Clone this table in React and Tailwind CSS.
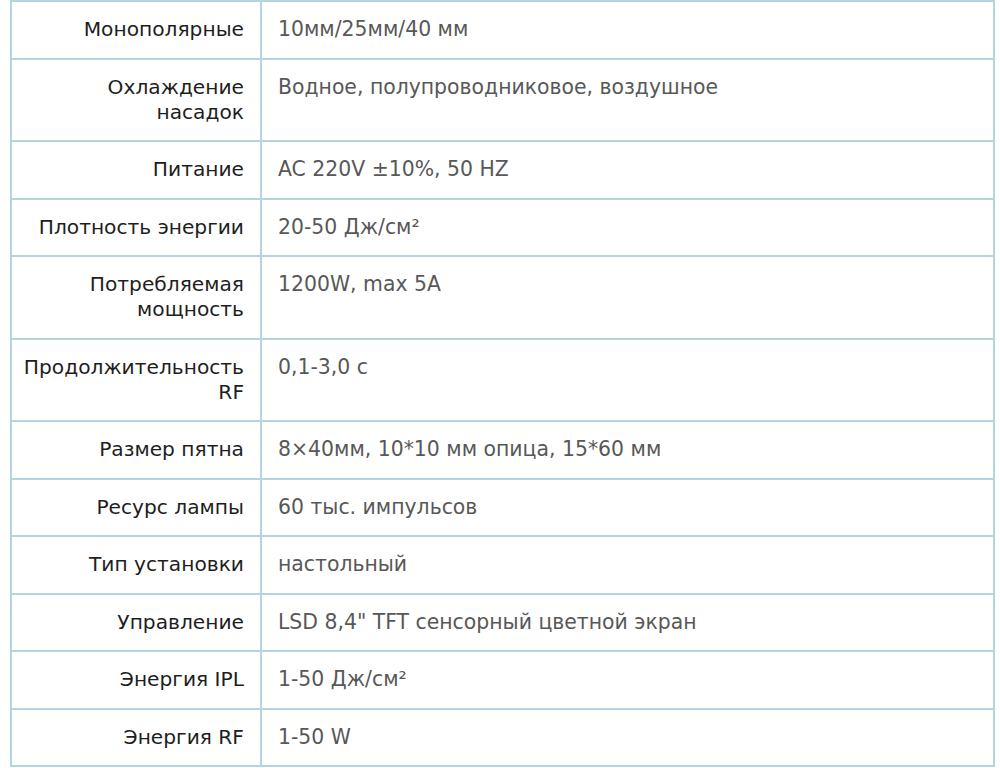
import React from "react";

const rows = [
  ["Монополярные", "10мм/25мм/40 мм"],
  ["Охлаждение насадок", "Водное, полупроводниковое, воздушное"],
  ["Питание", "AC 220V ±10%, 50 HZ"],
  ["Плотность энергии", "20-50 Дж/см²"],
  ["Потребляемая мощность", "1200W, max 5A"],
  ["Продолжительность RF", "0,1-3,0 с"],
  ["Размер пятна", "8×40мм, 10*10 мм опица, 15*60 мм"],
  ["Ресурс лампы", "60 тыс. импульсов"],
  ["Тип установки", "настольный"],
  ["Управление", "LSD 8,4\" TFT сенсорный цветной экран"],
  ["Энергия IPL", "1-50 Дж/см²"],
  ["Энергия RF", "1-50 W"],
];

export default function App() {
  return (
    <div className="w-[1000px] h-[768px] bg-white overflow-hidden">
      <table
        className="ml-[10px] w-[985px] border-collapse table-fixed"
        style={{ fontFamily: '"DejaVu Sans", Verdana, sans-serif' }}
      >
        <colgroup>
          <col className="w-[250px]" />
          <col />
        </colgroup>
        <tbody>
          {rows.map(([k, v], i) => (
            <tr key={i}>
              <td className="border-2 border-[#b2d5df] text-right align-top pl-[10px] pr-4 py-[15.25px] text-[20.2px] leading-[25px] text-[#1e1e1e]">
                {k}
              </td>
              <td className="border-2 border-[#b2d5df] text-left align-top pl-4 pr-4 py-[15.25px] text-[20.4px] leading-[25px] text-[#585858]">
                {v}
              </td>
            </tr>
          ))}
        </tbody>
      </table>
    </div>
  );
}
